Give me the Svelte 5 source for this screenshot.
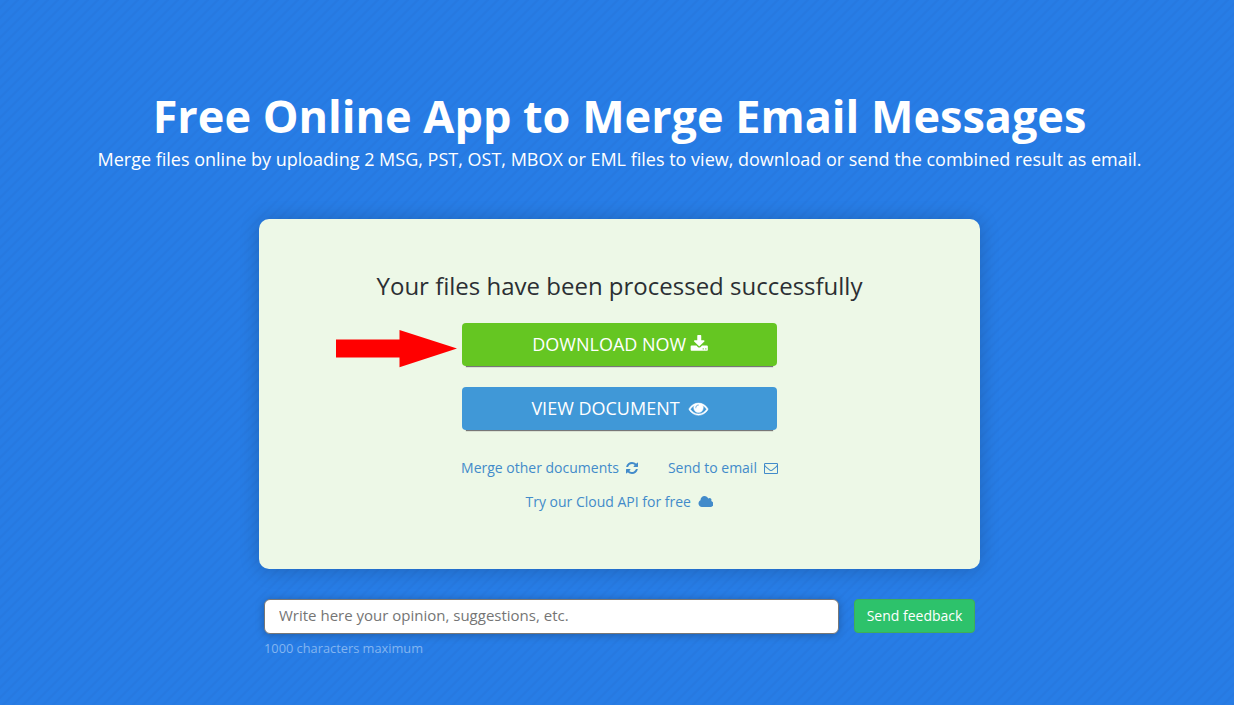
<script>
  const links = [
    [
      { label: 'Merge other documents', icon: 'refresh' },
      { label: 'Send to email', icon: 'envelope' }
    ],
    [{ label: 'Try our Cloud API for free', icon: 'cloud' }]
  ];
  const icons = {
    download: { w: 1792, d: 'M1344 1344q0-26-19-45t-45-19-45 19-19 45 19 45 45 19 45-19 19-45zm256 0q0-26-19-45t-45-19-45 19-19 45 19 45 45 19 45-19 19-45zm128-224v320q0 40-28 68t-68 28h-1472q-40 0-68-28t-28-68v-320q0-40 28-68t68-28h465l135 136q58 56 136 56t136-56l136-136h464q40 0 68 28t28 68zm-325-569q17 41-14 70l-448 448q-18 19-45 19t-45-19l-448-448q-31-29-14-70 17-39 59-39h256v-448q0-26 19-45t45-19h256q26 0 45 19t19 45v448h256q42 0 59 39z' },
    eye: { w: 1792, d: 'M1664 960q-152-236-381-353 61 104 61 225 0 185-131.500 316.500t-316.500 131.500-316.500-131.500-131.500-316.500q0-121 61-225-229 117-381 353 133 205 333.500 326.500t434.500 121.500 434.500-121.500 333.500-326.500zm-720-384q0-20-14-34t-34-14q-125 0-214.500 89.500t-89.500 214.500q0 20 14 34t34 14 34-14 14-34q0-86 61-147t147-61q20 0 34-14t14-34zm848 384q0 34-20 69-140 230-376.500 368.500t-499.500 138.500-499.500-139-376.500-368q-20-35-20-69t20-69q140-229 376.500-368t499.500-139 499.500 139 376.500 368q20 35 20 69z' },
    refresh: { w: 1792, d: 'M1639 1056q0 5-1 7-64 268-268 434.500t-478 166.500q-146 0-282.500-55t-243.500-157l-129 129q-19 19-45 19t-45-19-19-45v-448q0-26 19-45t45-19h448q26 0 45 19t19 45-19 45l-137 137q71 66 161 102t187 36q134 0 250-65t186-179q11-17 53-117 8-23 30-23h192q13 0 22.500 9.500t9.500 22.500zm25-800v448q0 26-19 45t-45 19h-448q-26 0-45-19t-19-45 19-45l138-138q-148-137-349-137-134 0-250 65t-186 179q-11 17-53 117-8 23-30 23h-199q-13 0-22.500-9.500t-9.500-22.500v-7q65-268 270-434.500t480-166.500q146 0 284 55.500t245 156.500l130-129q19-19 45-19t45 19 19 45z' },
    envelope: { w: 1792, d: 'M1664 1504v-768q-32 36-69 66-268 206-426 338-51 43-83 67t-86.500 48.500-102.500 24.500h-2q-48 0-102.500-24.500t-86.500-48.500-83-67q-158-132-426-338-37-30-69-66v768q0 13 9.500 22.500t22.500 9.500h1472q13 0 22.500-9.500t9.500-22.500zm0-1051v-24.500l-.5-13-3-12.500-5.500-9-9-7.500-14-2.500h-1472q-13 0-22.500 9.500t-9.500 22.500q0 168 147 284 193 152 401 317 6 5 35 29.500t46 37.500 44.500 31.500 50.500 27.500 43 9h2q20 0 43-9t50.500-27.500 44.500-31.500 46-37.500 35-29.500q208-165 401-317 54-43 100.500-115.500t46.500-131.500zm128-37v1088q0 66-47 113t-113 47h-1472q-66 0-113-47t-47-113v-1088q0-66 47-113t113-47h1472q66 0 113 47t47 113z' },
    cloud: { w: 1984, d: 'M1984 1152q0 159-112.500 271.500t-271.500 112.500h-1088q-185 0-316.500-131.500t-131.500-316.500q0-132 71-241.500t187-163.500q-2-28-2-43 0-212 150-362t362-150q158 0 286.500 88t187.500 230q70-62 166-62 106 0 181 75t75 181q0 75-41 138 129 30 213 134.500t84 239.500z' }
  };
</script>

{#snippet icon(name)}
  <svg class="icon {name}" viewBox="0 0 {icons[name].w} 1792" aria-hidden="true"><path d={icons[name].d} /></svg>
{/snippet}

<main class="page">
  <h1>Free Online App to Merge Email Messages</h1>
  <p class="lead">Merge files online by uploading 2 MSG, PST, OST, MBOX or EML files to view, download or send the combined result as email.</p>

  <section class="card">
    <h2>Your files have been processed successfully</h2>
    <button class="action download-btn"><span>DOWNLOAD NOW</span>{@render icon('download')}</button>
    <button class="action view-btn"><span>VIEW DOCUMENT</span>{@render icon('eye')}</button>
    {#each links as row}
      <div class="links">
        {#each row as link}
          <a href="#top"><span>{link.label}</span>{@render icon(link.icon)}</a>
        {/each}
      </div>
    {/each}
    <svg class="pointer" viewBox="0 0 121 38" aria-hidden="true"><path d="M0 9.500H63.500V0L121 18.500L63.500 37.200V27.500H0Z" /></svg>
  </section>

  <form class="feedback">
    <input type="text" placeholder="Write here your opinion, suggestions, etc." />
    <button type="button" class="send">Send feedback</button>
  </form>
  <p class="hint">1000 characters maximum</p>
</main>

<style>
  :global(body) { margin: 0; }
  .page {
    box-sizing: border-box;
    height: 705px;
    padding: 90px 0 0 5px;
    display: flex;
    flex-direction: column;
    align-items: center;
    overflow: hidden;
    font-family: "Open Sans", sans-serif;
    background: repeating-linear-gradient(135deg, #277de6 0 3.800px, #2779e0 4.800px 6.200px, #277de6 7.071px);
    color: #fff;
  }
  h1, h2, p { margin: 0; white-space: nowrap; }
  h1 { font-size: 45px; font-weight: 700; line-height: 52px; margin-bottom: 1px; }
  .lead { font-size: 18px; line-height: 32px; }
  .card {
    position: relative;
    box-sizing: border-box;
    flex: none;
    width: 721px;
    height: 350px;
    margin-top: 44px;
    padding-top: 50px;
    border-radius: 10px;
    background: #edf8e7;
    box-shadow: 0 1px 20px rgba(0, 0, 0, .2);
    display: flex;
    flex-direction: column;
    align-items: center;
  }
  h2 { color: #2b2f33; font-size: 24px; font-weight: 400; line-height: 34px; margin-bottom: 20px; }
  button { font-family: inherit; color: #fff; border: 0; padding: 0; }
  .action {
    box-sizing: border-box;
    width: 315px;
    height: 43px;
    padding-bottom: 2px;
    margin-bottom: 21px;
    border-radius: 4px;
    font-size: 18px;
    display: flex;
    align-items: center;
    justify-content: center;
    box-shadow: 0 5px 1px -4px #777;
  }
  .download-btn { background: #65c622; gap: 4px; padding-left: 2px; }
  .view-btn { background: #4098d7; gap: 9px; }
  .icon { height: 18px; fill: currentColor; flex: none; }
  .eye { height: 19px; margin-top: 1px; stroke: currentColor; stroke-width: 45; overflow: visible; }
  .download { height: 18.500px; margin-top: 2px; }
  .links { display: flex; gap: 28px; height: 34px; align-items: center; }
  .links a { display: flex; align-items: center; gap: 7px; color: #428bca; font-size: 14px; line-height: 20px; text-decoration: none; }
  .links .icon { height: 14px; }
  .links .refresh { margin: 0 1px 0 -1px; }
  .pointer { position: absolute; left: 77px; top: 111px; width: 121px; height: 38px; fill: #f00; }
  .feedback { display: flex; gap: 15px; margin-top: 30px; width: 711px; }
  input {
    box-sizing: border-box;
    width: 575px;
    height: 35px;
    padding: 0 14px 3px;
    border: 1px solid #777;
    border-radius: 6px;
    background: #fff;
    font: 15px "Open Sans", sans-serif;
    box-shadow: 0 1px 8px rgba(0, 0, 0, .25);
  }
  input::placeholder { color: #757575; opacity: 1; }
  .send { box-sizing: border-box; width: 121px; height: 34px; padding-bottom: 2px; border: 1px solid #3fae58; border-radius: 4px; background: #2dc26b; font-size: 14px; }
  .hint { width: 711px; font-size: 12.800px; line-height: 20px; margin-top: 4px; color: #83b5f0; }
</style>
